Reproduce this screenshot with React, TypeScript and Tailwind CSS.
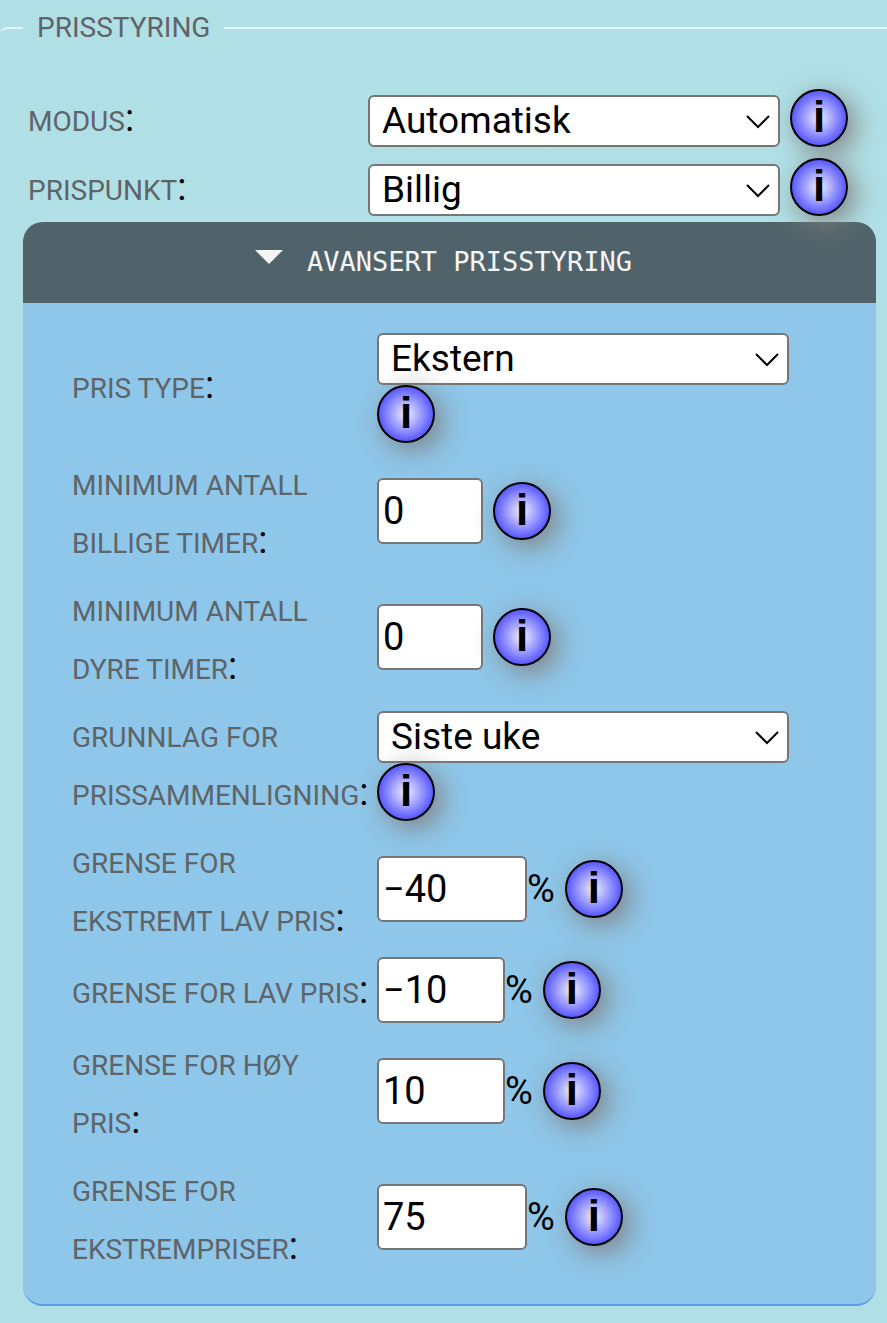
import { ReactNode } from "react";

function Info({ topic }: { topic: string }) {
  return (
    <button
      type="button"
      aria-label={`Info om ${topic}`}
      className="relative flex size-[58px] shrink-0 items-center justify-center rounded-full border-2 border-black bg-[radial-gradient(circle,#f0f0ff_0%,#5050ff_75%)] pb-[2px] font-['Liberation_Sans',sans-serif] text-[44px] leading-none font-bold text-black shadow-[7px_7px_28px_#808080]"
    >
      i
    </button>
  );
}

function Select({ id, value }: { id: string; value: string }) {
  return (
    <div className="relative w-[412px] max-w-full">
      <select
        id={id}
        defaultValue={value}
        className="block h-[52px] w-full appearance-none rounded-md border-2 border-[#767676] bg-white pl-3 text-[37px] leading-[48px] text-black"
      >
        <option>{value}</option>
      </select>
      <svg
        viewBox="0 0 24 14"
        className="pointer-events-none absolute top-5 right-[10px] h-[14px] w-6"
        fill="none"
        stroke="black"
        strokeWidth="2"
      >
        <path d="M1 1 L12 12 L23 1" />
      </svg>
    </div>
  );
}

function Label({ id, text }: { id: string; text: string }) {
  return (
    <label htmlFor={id} className="block text-[38px] leading-[58px] whitespace-pre-line text-black">
      <span className="text-[28px] leading-7 text-[#5f6468]">{text}</span>:
    </label>
  );
}

function Row({ id, text, children }: { id: string; text: string; children: ReactNode }) {
  return (
    <div className="grid grid-cols-[305px_1fr] items-center">
      <Label id={id} text={text} />
      {children}
    </div>
  );
}

function SelectField({ id, value, topic }: { id: string; value: string; topic: string }) {
  return (
    <div className="pt-[6px]">
      <Select id={id} value={value} />
      <Info topic={topic} />
    </div>
  );
}

function NumberField({ id, value, width, unit, topic }: { id: string; value: string; width: string; unit?: string; topic: string }) {
  return (
    <div className="flex items-center">
      <input
        id={id}
        inputMode="numeric"
        defaultValue={value}
        className={`h-[66px] rounded-md border-2 border-[#767676] bg-white px-1 text-[38px] text-black ${width}`}
      />
      {unit && <span className="text-[38px] leading-[58px]">{unit}</span>}
      <span className="ml-[10px]">
        <Info topic={topic} />
      </span>
    </div>
  );
}

function TopRow({ id, text, value }: { id: string; text: string; value: string }) {
  return (
    <div className="flex items-end">
      <div className="w-[340px] shrink-0">
        <Label id={id} text={text} />
      </div>
      <Select id={id} value={value} />
      <span className="ml-[10px]">
        <Info topic={text.toLowerCase()} />
      </span>
    </div>
  );
}

export default function App() {
  return (
    <main className="min-h-screen bg-[#b0e0e6] pt-2 pb-4 font-[Roboto,sans-serif]">
      <fieldset className="rounded-tl-lg border-t-2 border-[#e4f5f7]">
        <legend className="ml-[23px] px-[14px] text-[28px] leading-10 text-[#5f6468]">PRISSTYRING</legend>

        <div className="mt-[41px] flex flex-col gap-[11px] pl-7">
          <TopRow id="modus" text="MODUS" value="Automatisk" />
          <TopRow id="prispunkt" text="PRISPUNKT" value="Billig" />
        </div>

        <section className="mt-[6px] mr-[11px] ml-[23px] overflow-hidden rounded-[20px] border-b-2 border-[#559fe2] bg-[#8ec7ea]">
          <button type="button" className="flex h-[81px] w-full items-center justify-center gap-6 bg-[#51636a] pr-3 text-[#f5f5f5]">
            <svg viewBox="0 0 28 14" className="mb-3 h-[14px] w-7" fill="currentColor">
              <path d="M0 0H28L14 14Z" />
            </svg>
            <span className="font-['DejaVu_Sans_Mono',monospace] text-[27px]">AVANSERT PRISSTYRING</span>
          </button>

          <div className="flex flex-col gap-[10px] pt-6 pb-[29px] pl-[49px]">
            <Row id="type" text="PRIS TYPE">
              <SelectField id="type" value="Ekstern" topic="pris type" />
            </Row>
            <Row id="billige" text={"MINIMUM ANTALL\nBILLIGE TIMER"}>
              <NumberField id="billige" value="0" width="w-[106px]" topic="billige timer" />
            </Row>
            <Row id="dyre" text={"MINIMUM ANTALL\nDYRE TIMER"}>
              <NumberField id="dyre" value="0" width="w-[106px]" topic="dyre timer" />
            </Row>
            <Row id="grunnlag" text={"GRUNNLAG FOR\nPRISSAMMENLIGNING"}>
              <SelectField id="grunnlag" value="Siste uke" topic="prissammenligning" />
            </Row>
            <Row id="ekstremlav" text={"GRENSE FOR\nEKSTREMT LAV PRIS"}>
              <NumberField id="ekstremlav" value="−40" width="w-[150px]" unit="%" topic="ekstremt lav pris" />
            </Row>
            <Row id="lav" text="GRENSE FOR LAV PRIS">
              <NumberField id="lav" value="−10" width="w-[128px]" unit="%" topic="lav pris" />
            </Row>
            <Row id="hoy" text={"GRENSE FOR HØY\nPRIS"}>
              <NumberField id="hoy" value="10" width="w-[128px]" unit="%" topic="høy pris" />
            </Row>
            <Row id="ekstrem" text={"GRENSE FOR\nEKSTREMPRISER"}>
              <NumberField id="ekstrem" value="75" width="w-[150px]" unit="%" topic="ekstrempriser" />
            </Row>
          </div>
        </section>
      </fieldset>
    </main>
  );
}
